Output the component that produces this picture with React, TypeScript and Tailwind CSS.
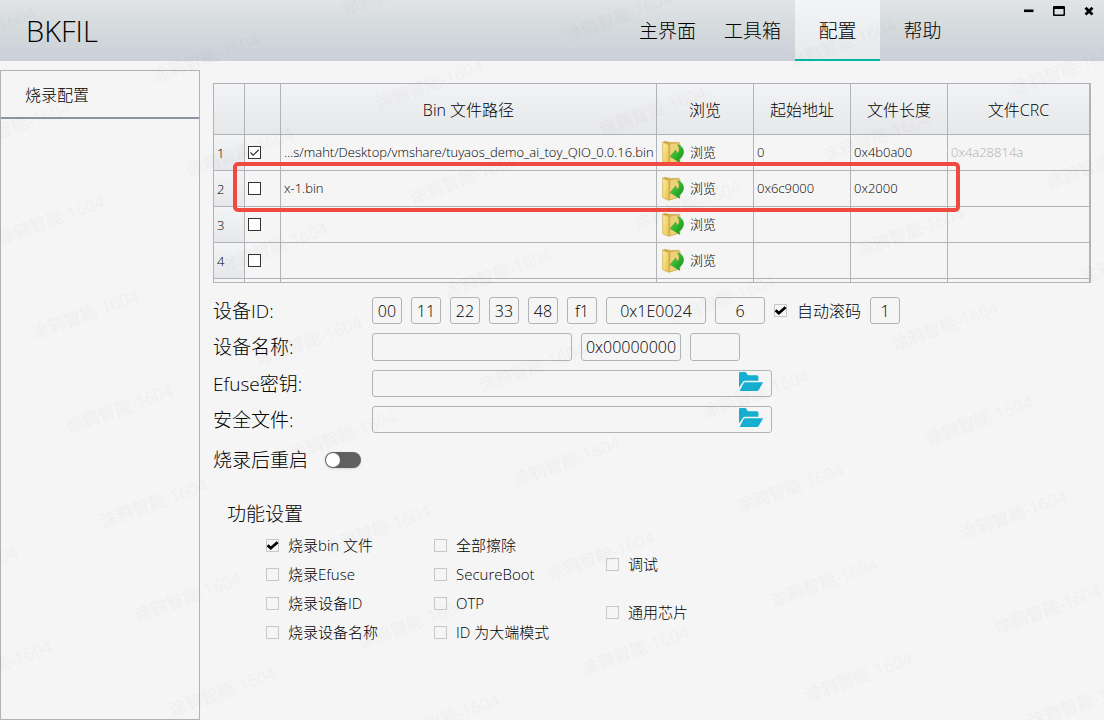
import { useId, useState } from "react";
import type { ReactNode } from "react";

const TABS = ["主界面", "工具箱", "配置", "帮助"];

type BinRow = { enabled: boolean; path: string; start: string; length: string; crc: string };

const ROWS: BinRow[] = [
  {
    enabled: true,
    path: "…s/maht/Desktop/vmshare/tuyaos_demo_ai_toy_QIO_0.0.16.bin",
    start: "0",
    length: "0x4b0a00",
    crc: "0x4a28814a",
  },
  { enabled: false, path: "x-1.bin", start: "0x6c9000", length: "0x2000", crc: "" },
  { enabled: false, path: "", start: "", length: "", crc: "" },
  { enabled: false, path: "", start: "", length: "", crc: "" },
];

const ID_BYTES = ["00", "11", "22", "33", "48", "f1"];

const FEATURES: { label: string; on: boolean }[][] = [
  [
    { label: "烧录bin 文件", on: true },
    { label: "烧录Efuse", on: false },
    { label: "烧录设备ID", on: false },
    { label: "烧录设备名称", on: false },
  ],
  [
    { label: "全部擦除", on: false },
    { label: "SecureBoot", on: false },
    { label: "OTP", on: false },
    { label: "ID 为大端模式", on: false },
  ],
];

const EXTRA_FEATURES = ["调试", "通用芯片"];

function FolderOpenIcon() {
  return (
    <svg viewBox="0 0 24 19" className="h-[19px] w-6" fill="#16aed0" aria-hidden="true">
      <path d="M0 17.5V1.2Q0 0 1.2 0H6.6L9 3.2H17.6Q19.4 3.2 19.4 5V8.8H6.2Q4.6 8.8 3.7 10.2L0 15.6Z" />
      <path d="M6.4 10.2H24.2L20 17.4Q19.3 19 17.6 19H0.6L4.4 11.5Q5 10.2 6.4 10.2Z" />
    </svg>
  );
}

function BrowseIcon() {
  return (
    <svg viewBox="0 0 22 24" className="h-6 w-[22px] shrink-0" aria-hidden="true">
      <defs>
        <linearGradient id="folder-front" x1="0" y1="0" x2="1" y2="1">
          <stop offset="0" stopColor="#fdf0a0" />
          <stop offset="1" stopColor="#e6c050" />
        </linearGradient>
        <linearGradient id="folder-back" x1="0" y1="0" x2="1" y2="0">
          <stop offset="0" stopColor="#c99c35" />
          <stop offset="1" stopColor="#f0d67c" />
        </linearGradient>
        <linearGradient id="arrow-green" x1="0" y1="0" x2="1" y2="1">
          <stop offset="0" stopColor="#5fe04e" />
          <stop offset="1" stopColor="#0c8a16" />
        </linearGradient>
      </defs>
      <path d="M1 1L3 0.4L9 1.6L17 1.2L18 3V20L7 23L1 20Z" fill="url(#folder-back)" stroke="#c79d3c" strokeWidth="0.6" />
      <path d="M8 3.5L10 2.5L17.2 2.2V20L8 22.8Z" fill="#efd277" stroke="#cfa648" strokeWidth="0.5" />
      <path d="M0.7 1.2L6.8 3.8V23.4L0.7 20.8Z" fill="url(#folder-front)" stroke="#d0a94c" strokeWidth="0.6" />
      <path
        d="M15.6 3.8C20.2 4.8 22.4 9 21.2 13C20.4 15.6 18.8 17.4 17 18.2L17.8 21.4L8.2 15.6L13.8 9L14.9 12.4C17.8 11 18.2 7.4 15.6 3.8Z"
        fill="url(#arrow-green)"
        stroke="#1c9a22"
        strokeWidth="0.5"
      />
    </svg>
  );
}

function CheckBox({ id, label, on, grid = false }: { id?: string; label?: string; on: boolean; grid?: boolean }) {
  const [checked, setChecked] = useState(on);
  return (
    <span className="relative block size-[13px] shrink-0">
      <input
        id={id}
        type="checkbox"
        aria-label={label}
        checked={checked}
        onChange={(e) => setChecked(e.target.checked)}
        className={
          grid
            ? "block size-[13px] appearance-none border border-[#333333] bg-white"
            : "block size-[13px] appearance-none border border-[#c6c8ca] bg-[#f5f5f5]"
        }
      />
      {checked && (
        <svg viewBox="0 0 13 13" className="pointer-events-none absolute inset-0 size-[13px]" fill="none" aria-hidden="true">
          {grid ? (
            <path d="M2.5 6.5L5.2 9.2L10.8 3.8" stroke="#333333" strokeWidth="1.2" />
          ) : (
            <path d="M1.6 6.2L4.8 9.2L11.6 3.2" stroke="#000000" strokeWidth="2.8" />
          )}
        </svg>
      )}
    </span>
  );
}

function Feature({ label, on }: { label: string; on: boolean }) {
  const id = useId();
  return (
    <div className="flex h-[29px] items-center gap-[9px]">
      <CheckBox id={id} on={on} />
      <label htmlFor={id} className="pb-[2px] text-[15px] leading-5 whitespace-nowrap">
        {label}
      </label>
    </div>
  );
}

const FIELD = "rounded-[3px] border border-[#b0b4b8] bg-transparent text-center text-[16px] text-black outline-none";

function Row({ label, htmlFor, children }: { label: string; htmlFor: string; children: ReactNode }) {
  return (
    <div className="flex items-center">
      <label htmlFor={htmlFor} className="w-[159px] shrink-0 text-[19px] leading-6 whitespace-nowrap">
        {label}
      </label>
      <div className="flex items-center gap-[9px]">{children}</div>
    </div>
  );
}

function FileField({ id, label }: { id: string; label: string }) {
  return (
    <Row label={label} htmlFor={id}>
      <div className="flex h-[27px] w-[400px] items-start rounded-[3px] border border-[#b0b4b8] pr-2">
        <input id={id} type="text" className="h-full min-w-0 flex-1 bg-transparent px-2 text-[16px] outline-none" />
        <button type="button" aria-label="打开文件" className="pt-px">
          <FolderOpenIcon />
        </button>
      </div>
    </Row>
  );
}

function BinTable() {
  const th =
    "border-r border-b border-[#b0b4b8] bg-linear-to-b from-[#f2f3f6] to-[#e6e7e9] p-0 pt-[2px] text-[16px] font-light last:border-r-0";
  const td = "h-9 border-r border-b border-[#b0b4b8] py-0 pr-1 pl-[3px] last:border-r-0";
  return (
    <div className="relative">
      <div className="h-[200px] overflow-hidden border border-r-2 border-[#b0b4b8]">
        <table className="w-full table-fixed border-separate border-spacing-0 text-[13px]">
          <colgroup>
            <col className="w-[31px]" />
            <col className="w-9" />
            <col />
            <col className="w-[97px]" />
            <col className="w-[97px]" />
            <col className="w-[97px]" />
            <col className="w-[141px]" />
          </colgroup>
          <thead>
            <tr className="h-[51px]">
              <th className={th} />
              <th className={th} />
              <th className={th}>Bin 文件路径</th>
              <th className={th}>浏览</th>
              <th className={th}>起始地址</th>
              <th className={th}>文件长度</th>
              <th className={th}>文件CRC</th>
            </tr>
          </thead>
          <tbody>
            {ROWS.map((row, i) => (
              <tr key={i}>
                <th
                  scope="row"
                  className="h-9 border-r border-b border-[#b0b4b8] bg-linear-to-b from-[#f3f4f6] to-[#e6e8eb] pt-[2px] pb-0 pl-[3px] text-left font-light"
                >
                  {i + 1}
                </th>
                <td className={td}>
                  <CheckBox label={`启用第 ${i + 1} 行`} on={row.enabled} grid />
                </td>
                <td className={`${td} overflow-hidden whitespace-nowrap`}>{row.path}</td>
                <td className={td}>
                  <button type="button" className="flex items-center gap-[6px] pl-[2px]">
                    <BrowseIcon />
                    浏览
                  </button>
                </td>
                <td className={td}>{row.start}</td>
                <td className={td}>{row.length}</td>
                <td className={`${td} text-[#b0b0b0]`}>{row.crc}</td>
              </tr>
            ))}
            <tr>
              <th className="h-9 border-r border-[#b0b4b8] bg-[#f3f4f6]" />
              <td className={td} />
              <td className={td} />
              <td className={td} />
              <td className={td} />
              <td className={td} />
              <td className={td} />
            </tr>
          </tbody>
        </table>
      </div>
      <div className="pointer-events-none absolute top-[79px] right-[131px] left-5 h-[50px] rounded-[5px] border-4 border-[#f04a40]" />
    </div>
  );
}

/* Faint user stamp repeated on a slanted lattice over the whole window. */
function Watermark() {
  const marks: { x: number; y: number }[] = [];
  for (let i = -1; i < 7; i++) {
    for (let j = -11; j < 9; j++) {
      const x = 85 + i * 223.5 + j * 34.3;
      const y = 314 + i * 26.5 + j * 94.3;
      if (x > -50 && x < 1150 && y > -15 && y < 735) marks.push({ x, y });
    }
  }
  return (
    <svg className="pointer-events-none absolute inset-0 size-full opacity-[0.018]" aria-hidden="true">
      {marks.map((m) => (
        <text
          key={`${m.x},${m.y}`}
          transform={`translate(${m.x} ${m.y}) rotate(-20)`}
          textAnchor="middle"
          dominantBaseline="central"
          className="fill-black text-[17px] font-medium"
        >
          涂鸦智能-1604
        </text>
      ))}
    </svg>
  );
}

export default function App() {
  const [tab, setTab] = useState("配置");
  return (
    <div className="relative flex min-h-screen flex-col overflow-hidden bg-[#f5f5f5] [font-family:'Open_Sans','Noto_Sans_CJK_SC',sans-serif] font-light text-black">
      <header className="flex h-[61px] bg-linear-to-b from-[#e0e4e6] via-[#d4d9dc] to-[#cbd0da]">
        <h1 className="flex-1 pl-[26px] text-[29px] leading-[61px]">BKFIL</h1>
        <nav className="flex">
          {TABS.map((t) => (
            <button
              key={t}
              type="button"
              onClick={() => setTab(t)}
              className={
                t === tab
                  ? "w-[85px] border-b-2 border-[#00b9a2] bg-linear-to-b from-[#f3f4f6] to-[#e7e9eb] pt-1 text-[19px]"
                  : "w-[85px] border-b-2 border-transparent pt-1 text-[19px]"
              }
            >
              {t}
            </button>
          ))}
        </nav>
        <div className="flex w-[139px] items-start justify-end">
          <button type="button" aria-label="最小化" className="flex h-[22px] w-[30px] items-center justify-center">
            <svg viewBox="0 0 12 12" className="size-3" aria-hidden="true">
              <path d="M1 4.5h9.5v2.6H1Z" />
            </svg>
          </button>
          <button type="button" aria-label="最大化" className="flex h-[22px] w-[30px] items-center justify-center">
            <svg viewBox="0 0 12 12" className="size-3" aria-hidden="true">
              <path fillRule="evenodd" d="M1 1H11Q12 1 12 2V10Q12 11 11 11H1Q0 11 0 10V2Q0 1 1 1ZM1.5 4V9.5H10.5V4Z" />
            </svg>
          </button>
          <button type="button" aria-label="关闭" className="flex h-[22px] w-[30px] items-center justify-center">
            <svg viewBox="0 0 12 12" className="size-3" aria-hidden="true">
              <path d="M2.5 2.8L9.5 9.4M9.5 2.8L2.5 9.4" stroke="black" strokeWidth="2.8" />
            </svg>
          </button>
        </div>
      </header>

      <div className="flex flex-1">
        <aside className="mt-[9px] w-[200px] shrink-0 border border-[#b0b4b8]">
          <button type="button" className="block h-12 w-full border-b-2 border-[#8b96a2] pt-[2px] pl-6 text-left text-[16px]">
            烧录配置
          </button>
        </aside>

        <main className="min-w-0 flex-1 px-[13px] pt-[22px]">
          <BinTable />

          <form className="mt-[14px] flex flex-col gap-[9px]">
            <Row label="设备ID:" htmlFor="device-id">
              {ID_BYTES.map((b, i) => (
                <input
                  key={i}
                  id={i === 0 ? "device-id" : undefined}
                  aria-label={`设备ID 字节 ${i + 1}`}
                  defaultValue={b}
                  className={`${FIELD} h-[27px] w-[30px]`}
                />
              ))}
              <input aria-label="ID 地址" defaultValue="0x1E0024" className={`${FIELD} h-[27px] w-[100px]`} />
              <input aria-label="ID 长度" defaultValue="6" className={`${FIELD} h-[27px] w-[50px]`} />
              <CheckBox id="auto-roll" on />
              <label htmlFor="auto-roll" className="pl-px text-[16px] leading-6 whitespace-nowrap">
                自动滚码
              </label>
              <input aria-label="滚码步长" defaultValue="1" className={`${FIELD} h-[27px] w-[30px]`} />
            </Row>
            <Row label="设备名称:" htmlFor="device-name">
              <input id="device-name" className={`${FIELD} h-7 w-[200px]`} />
              <input aria-label="名称地址" defaultValue="0x00000000" className={`${FIELD} h-7 w-[100px]`} />
              <input aria-label="名称长度" className={`${FIELD} h-7 w-[50px]`} />
            </Row>
            <FileField id="efuse-key" label="Efuse密钥:" />
            <FileField id="secure-file" label="安全文件:" />
          </form>

          <div className="mt-[15px] flex h-6 items-center gap-[17px]">
            <label htmlFor="reboot" className="text-[19px] leading-6">
              烧录后重启
            </label>
            <input
              id="reboot"
              type="checkbox"
              role="switch"
              className="h-4 w-9 appearance-none rounded-full bg-[#606060] p-px shadow-sm before:block before:size-[14px] before:rounded-full before:bg-white checked:before:ml-5"
            />
          </div>

          <fieldset className="mt-[30px] pl-[14px]">
            <legend className="text-[19px] leading-6">功能设置</legend>
            <div className="mt-[5px] flex pl-[39px]">
              {FEATURES.map((col, i) => (
                <div key={i} className="flex w-[168px] flex-col">
                  {col.map((f) => (
                    <Feature key={f.label} label={f.label} on={f.on} />
                  ))}
                </div>
              ))}
              <div className="flex flex-col gap-[19px] pt-[19px] pl-1">
                {EXTRA_FEATURES.map((label) => (
                  <Feature key={label} label={label} on={false} />
                ))}
              </div>
            </div>
          </fieldset>
        </main>
      </div>
      <Watermark />
    </div>
  );
}
